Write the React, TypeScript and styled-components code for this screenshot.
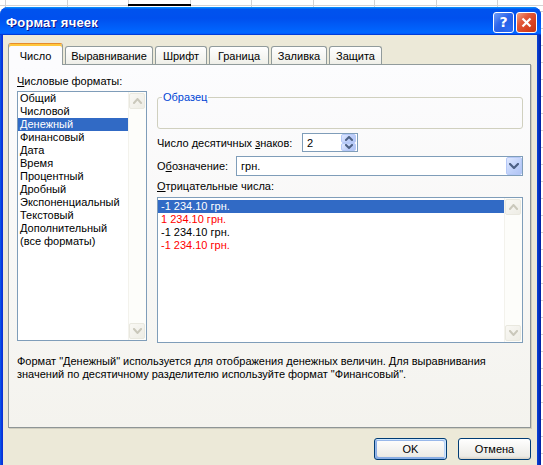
import React from 'react'
import styled, { createGlobalStyle, css } from 'styled-components'

const formats = [
	'Общий',
	'Числовой',
	'Денежный',
	'Финансовый',
	'Дата',
	'Время',
	'Процентный',
	'Дробный',
	'Экспоненциальный',
	'Текстовый',
	'Дополнительный',
	'(все форматы)',
]

const negatives = [
	{ text: '-1 234.10 грн.', red: false },
	{ text: '1 234.10 грн.', red: true },
	{ text: '-1 234.10 грн.', red: false },
	{ text: '-1 234.10 грн.', red: true },
]

const tabs = [
	{ label: 'Число', width: 55 },
	{ label: 'Выравнивание', width: 88 },
	{ label: 'Шрифт', width: 52 },
	{ label: 'Граница', width: 60 },
	{ label: 'Заливка', width: 56 },
	{ label: 'Защита', width: 53 },
]

type ChevronProps = { dir: 'up' | 'down'; color: string; w?: number; h?: number; sw?: number }

const Chevron = ({ dir, color, w = 7, h = 4, sw = 2 }: ChevronProps) => {
	const points = dir === 'up' ? `1,${h + 1} ${w / 2 + 1},1 ${w + 1},${h + 1}` : `1,1 ${w / 2 + 1},${h + 1} ${w + 1},1`
	return (
		<svg width={w + 2} height={h + 2} viewBox={`0 0 ${w + 2} ${h + 2}`}>
			<polyline points={points} fill="none" stroke={color} strokeWidth={sw} strokeLinecap="square" />
		</svg>
	)
}

const DisabledScroll = () => (
	<ScrollBar>
		<ScrollBtn>
			<Chevron dir="up" color="#cac8bb" />
		</ScrollBtn>
		<Track />
		<ScrollBtn>
			<Chevron dir="down" color="#cac8bb" />
		</ScrollBtn>
	</ScrollBar>
)

const App = () => {
	return (
		<>
			<GlobalStyle />
			<Window>
				<TitleBar>
					<Title>Формат ячеек</Title>
					<TitleButtons>
						<HelpButton>?</HelpButton>
						<CloseButton>
							<svg width="11" height="11" viewBox="0 0 11 11">
								<path d="M1.5 1.5 L9.5 9.5 M9.5 1.5 L1.5 9.5" stroke="#fff" strokeWidth="2.2" />
							</svg>
						</CloseButton>
					</TitleButtons>
				</TitleBar>
				<Client>
					<TabRow>
						{tabs.map((t, i) => (
							<Tab key={t.label} $w={t.width} $active={i === 0}>
								{t.label}
							</Tab>
						))}
					</TabRow>
					<Panel>
						<PanelGrid>
							<Label>
								<u>Ч</u>исловые форматы:
							</Label>
							<span />
							<FormatList>
								<Items>
									{formats.map(f => (
										<Item key={f} $selected={f === 'Денежный'}>
											{f}
										</Item>
									))}
								</Items>
								<DisabledScroll />
							</FormatList>
							<RightColumn>
								<Sample>
									<SampleLegend>Образец</SampleLegend>
								</Sample>
								<FieldRow>
									<FieldLabel $w={145}>
										Число десятичных <u>з</u>наков:
									</FieldLabel>
									<SpinBox>
										<SpinValue>2</SpinValue>
										<SpinButtons>
											<SpinButton>
												<Chevron dir="up" color="#4d6185" w={6} h={3} />
											</SpinButton>
											<SpinButton>
												<Chevron dir="down" color="#4d6185" w={6} h={3} />
											</SpinButton>
										</SpinButtons>
									</SpinBox>
								</FieldRow>
								<FieldRow>
									<FieldLabel $w={79}>
										О<u>б</u>означение:
									</FieldLabel>
									<Combo>
										<ComboValue>грн.</ComboValue>
										<ComboButton>
											<Chevron dir="down" color="#4d6185" w={8} h={4} sw={2.2} />
										</ComboButton>
									</Combo>
								</FieldRow>
								<NegLabel>
									<u>О</u>трицательные числа:
								</NegLabel>
								<NegList>
									<Items $padTop={2}>
										{negatives.map((n, i) => (
											<NegItem key={i} $selected={i === 0} $red={n.red}>
												{n.text}
											</NegItem>
										))}
									</Items>
									<DisabledScroll />
								</NegList>
							</RightColumn>
						</PanelGrid>
						<Description>
							Формат "Денежный" используется для отображения денежных величин. Для выравнивания
							<br />
							значений по десятичному разделителю используйте формат "Финансовый".
						</Description>
					</Panel>
					<ButtonRow>
						<DialogButton $default>OK</DialogButton>
						<DialogButton>Отмена</DialogButton>
					</ButtonRow>
				</Client>
			</Window>
		</>
	)
}

export default App

const GlobalStyle = createGlobalStyle`
	html, body {
		margin: 0;
		padding: 0;
	}

	body {
		width: 543px;
		height: 465px;
		overflow: hidden;
		font-family: 'Liberation Sans', Arial, sans-serif;
		font-size: 11px;
		color: #000;
		background-color: #fff;
		background-image:
			linear-gradient(#000, #000),
			repeating-linear-gradient(90deg, #d2d2d2 0 1px, transparent 1px 61.5px),
			repeating-linear-gradient(180deg, #d2d2d2 0 1px, transparent 1px 17px);
		background-size: 63px 2px, auto, auto;
		background-position: 128px 4px, 5px 0, 0 11px;
		background-repeat: no-repeat, repeat, repeat;
	}

	u {
		text-decoration: underline;
		text-underline-offset: 1px;
	}
`

const Window = styled.div`
	margin-top: 7px;
	width: 541px;
	height: 470px;
	display: flex;
	flex-direction: column;
	border-radius: 8px 8px 0 0;
	overflow: hidden;
	background: linear-gradient(90deg, #0a5ceb 0, #0831d9 2px, #0831d9 535px, #0a43d8 537px, #001ea0 541px);
`

const TitleBar = styled.div`
	height: 28px;
	flex-shrink: 0;
	box-sizing: border-box;
	padding: 2px 4px 0 6px;
	display: flex;
	align-items: center;
	justify-content: space-between;
	background: linear-gradient(
		180deg,
		#0997ff,
		#0053ee 8%,
		#0050ee 40%,
		#0066ff 88%,
		#0066ff 93%,
		#005bff 95%,
		#003dd7 96%,
		#003dd7
	);
`

const Title = styled.span`
	color: #fff;
	font-weight: bold;
	font-size: 13px;
	letter-spacing: 0.2px;
	text-shadow: 1px 1px #0f1089;
`

const TitleButtons = styled.div`
	display: flex;
	gap: 2px;
`

const titleButton = css`
	width: 21px;
	height: 21px;
	box-sizing: border-box;
	border: 1px solid #fff;
	border-radius: 3px;
	display: flex;
	align-items: center;
	justify-content: center;
`

const HelpButton = styled.div`
	${titleButton};
	background: radial-gradient(circle at 80% 85%, #2c6bf4 0, #2863e8 30%, transparent 70%),
		linear-gradient(135deg, #6d9cf7 0%, #2f66ec 45%, #1c4fd6 100%);
	color: #fff;
	font-family: 'DejaVu Sans', sans-serif;
	font-weight: bold;
	font-size: 14px;
`

const CloseButton = styled.div`
	${titleButton};
	background: linear-gradient(135deg, #f0a187 0%, #e2593a 35%, #d7401f 70%, #c23615 100%);
`

const Client = styled.div`
	flex: 1;
	margin: 0 4px 0 3px;
	padding: 8px 6px 0 5px;
	background: #ece9d8;
	display: flex;
	flex-direction: column;
`

const TabRow = styled.div`
	height: 21px;
	display: flex;
	align-items: flex-end;
	gap: 2px;
	position: relative;
	z-index: 1;
`

const Tab = styled.div<{ $w: number; $active?: boolean }>`
	width: ${p => p.$w}px;
	height: 18px;
	box-sizing: border-box;
	padding-top: 1px;
	border: 1px solid #919b9c;
	border-bottom: none;
	border-radius: 3px 3px 0 0;
	background: linear-gradient(180deg, #fff, #fafaf9 26%, #f0f0ea 95%, #ecebe5);
	display: flex;
	align-items: center;
	justify-content: center;

	${p =>
		p.$active &&
		css`
			height: 22px;
			margin-bottom: -1px;
			padding-top: 2px;
			border-top-color: #e68b2c;
			background: #fcfcfe;
			box-shadow: inset 0 2px #ffc73c;
		`}
`

const Panel = styled.div`
	height: 364px;
	box-sizing: border-box;
	border: 1px solid #919b9c;
	border-right-color: #8e9596;
	border-bottom-color: #8e9596;
	box-shadow: 1px 1px 0 #d0cebf;
	padding: 10px 6px 0 8px;
	background: linear-gradient(180deg, #fcfcfe, #f4f3ee);
`

const PanelGrid = styled.div`
	display: grid;
	grid-template-columns: 130px 366px;
	grid-template-rows: 13px auto;
	column-gap: 10px;
	row-gap: 3px;
`

const Label = styled.div`
	line-height: 13px;
	white-space: nowrap;
`

const listBox = css`
	box-sizing: border-box;
	border: 1px solid #7f9db9;
	background: #fff;
	display: flex;
`

const FormatList = styled.div`
	${listBox};
	height: 250px;
	align-self: start;
`

const Items = styled.div<{ $padTop?: number }>`
	flex: 1;
	padding-top: ${p => p.$padTop ?? 0}px;
`

const Item = styled.div<{ $selected?: boolean }>`
	height: 13px;
	line-height: 13px;
	padding-left: 2px;
	white-space: nowrap;
	background: ${p => (p.$selected ? '#316ac5' : 'transparent')};
	color: ${p => (p.$selected ? '#fff' : '#000')};
`

const NegItem = styled(Item)<{ $red?: boolean }>`
	padding-left: 3px;
	color: ${p => (p.$selected ? '#fff' : p.$red ? '#ff0000' : '#000')};
`

const ScrollBar = styled.div`
	width: 17px;
	display: flex;
	flex-direction: column;
	background: #fdfdfa;
	border-left: 1px solid #f3f2ec;
`

const ScrollBtn = styled.div`
	height: 16px;
	margin: 1px 1px 0 0;
	box-sizing: border-box;
	border: 1px solid #e9e8df;
	border-radius: 2px;
	background: linear-gradient(135deg, #f9f8f4, #eeede5);
	display: flex;
	align-items: center;
	justify-content: center;

	&:last-child {
		margin: 0 1px 1px 0;
	}
`

const Track = styled.div`
	flex: 1;
`

const RightColumn = styled.div`
	display: flex;
	flex-direction: column;
`

const Sample = styled.fieldset`
	margin: 0;
	padding: 0 4px;
	height: 38px;
	box-sizing: border-box;
	border: 1px solid #d0d0bf;
	border-radius: 3px;
	min-inline-size: auto;
`

const SampleLegend = styled.legend`
	padding: 0 1px;
	line-height: 13px;
	color: #0046d5;
`

const FieldRow = styled.div`
	margin-top: 4px;
	display: flex;
	align-items: center;
`

const FieldLabel = styled.div<{ $w: number }>`
	width: ${p => p.$w}px;
	white-space: nowrap;
`

const SpinBox = styled.div`
	width: 56px;
	height: 19px;
	box-sizing: border-box;
	border: 1px solid #7f9db9;
	background: #fff;
	display: flex;
	align-items: center;
`

const SpinValue = styled.span`
	flex: 1;
	padding-left: 4px;
`

const SpinButtons = styled.div`
	width: 15px;
	height: 17px;
	margin-right: 1px;
	display: flex;
	flex-direction: column;
`

const SpinButton = styled.div`
	flex: 1;
	box-sizing: border-box;
	border: 1px solid #b5c8f7;
	border-radius: 2px;
	background: linear-gradient(135deg, #dfe8ff, #bccdf9 60%, #b1c4f4);
	display: flex;
	align-items: center;
	justify-content: center;
`

const Combo = styled.div`
	width: 287px;
	height: 20px;
	box-sizing: border-box;
	border: 1px solid #7f9db9;
	background: #fff;
	display: flex;
	align-items: center;
`

const ComboValue = styled.span`
	flex: 1;
	padding-left: 4px;
`

const ComboButton = styled.div`
	width: 16px;
	height: 18px;
	box-sizing: border-box;
	border: 1px solid #b5c8f7;
	border-radius: 2px;
	background: linear-gradient(135deg, #dfe8ff, #c1d2fa 55%, #b1c4f4);
	display: flex;
	align-items: center;
	justify-content: center;
`

const NegLabel = styled.div`
	margin-top: 4px;
	line-height: 13px;
`

const NegList = styled.div`
	${listBox};
	margin-top: 4px;
	height: 146px;
`

const Description = styled.p`
	margin: 12px 0 0;
	line-height: 13px;
	white-space: nowrap;
`

const ButtonRow = styled.div`
	margin-top: 10px;
	display: flex;
	justify-content: flex-end;
	gap: 11px;
	padding-right: 0;
`

const DialogButton = styled.button<{ $default?: boolean }>`
	width: 73px;
	height: 22px;
	padding: 0;
	border: 1px solid #003c74;
	border-radius: 3px;
	font-family: inherit;
	font-size: 11px;
	color: #000;
	background: linear-gradient(180deg, #fff, #ecebe6 86%, #d6d0c5);

	${p =>
		p.$default &&
		css`
			box-shadow: inset -1px 1px #cee7ff, inset 1px 2px #98b8ea, inset -2px 2px #bcd4f6, inset 1px -1px #89ade4,
				inset 2px -2px #89ade4;
		`}
`
